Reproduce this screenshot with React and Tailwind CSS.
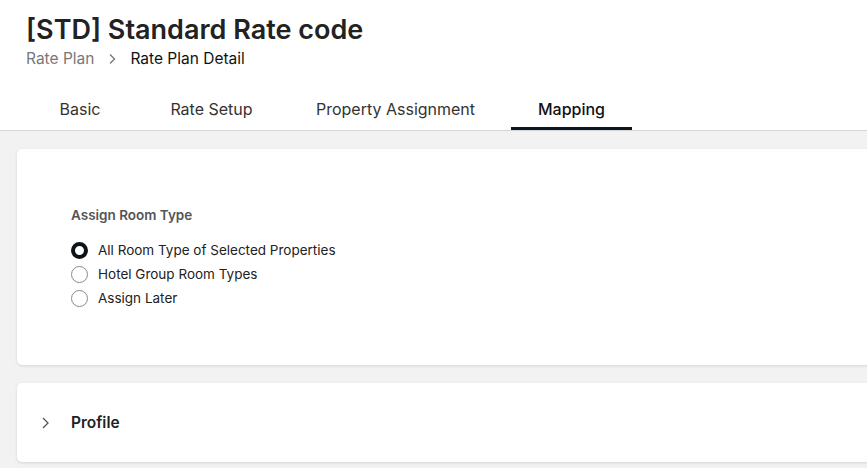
import React from 'react';

const tabs = [
  { label: 'Basic', w: 'w-[120px]', ml: 'ml-[20px]' },
  { label: 'Rate Setup', w: 'w-[121px]', ml: 'ml-[11px]' },
  { label: 'Property Assignment', w: 'w-[227px]', ml: 'ml-[10px]' },
  { label: 'Mapping', w: 'w-[121px]', ml: 'ml-[2px]', active: true },
];

const options = [
  { label: 'All Room Type of Selected Properties', checked: true },
  { label: 'Hotel Group Room Types' },
  { label: 'Assign Later' },
];

const Radio = ({ checked }) =>
  checked ? (
    <span className="w-[17px] h-[17px] rounded-full border-[4px] border-[#0d1418] bg-white shrink-0" />
  ) : (
    <span className="w-[17px] h-[17px] rounded-full border border-[#8a8a8a] bg-white shrink-0" />
  );

export default function App() {
  return (
    <div className="w-[867px] h-[468px] overflow-hidden bg-[#f2f2f2]" style={{ fontFamily: 'Inter, "Noto Sans", sans-serif' }}>
      <div className="bg-white border-b border-[#d6d6d6]">
        <div className="pl-[26px] pt-[12px]">
          <h1 className="text-[27px] leading-[36px] font-semibold text-[#222]">[STD] Standard Rate code</h1>
          <div className="flex items-center text-[15.5px] leading-[22px]">
            <span className="text-[#777]">Rate Plan</span>
            <svg className="mx-[13px]" width="10" height="12" viewBox="0 0 10 12" fill="none">
              <path d="M3 1.5 L7.5 6 L3 10.5" stroke="#777" strokeWidth="1.3" />
            </svg>
            <span className="text-[#111]">Rate Plan Detail</span>
          </div>
        </div>
        <div className="flex mt-[20px] h-[40px]">
          {tabs.map((t) => (
            <div
              key={t.label}
              className={`${t.w} ${t.ml} flex items-center justify-center text-[16px] pb-[2px] ${
                t.active ? 'text-[#111] font-medium border-b-[3px] border-[#0b161d] pt-[3px]' : 'text-[#333] pt-0'
              }`}
            >
              {t.label}
            </div>
          ))}
        </div>
      </div>

      <div className="pl-[17px] pt-[18px] flex flex-col gap-[18px]">
        <div className="w-[900px] h-[216px] bg-white rounded-[5px] shadow-[0_1px_3px_rgba(0,0,0,0.12)] pl-[54px] pt-[57px]">
          <div className="text-[13.5px] font-semibold text-[#555] leading-[18px]">Assign Room Type</div>
          <div className="mt-[14px] flex flex-col">
            {options.map((o) => (
              <label key={o.label} className="flex items-center gap-[10px] h-[24px]">
                <Radio checked={o.checked} />
                <span className="text-[13.5px] text-[#222]">{o.label}</span>
              </label>
            ))}
          </div>
        </div>

        <div className="w-[900px] h-[79px] bg-white rounded-[5px] shadow-[0_1px_3px_rgba(0,0,0,0.12)] flex items-center pl-[22px]">
          <svg width="12" height="16" viewBox="0 0 12 16" fill="none">
            <path d="M4 3 L9 8 L4 13" stroke="#555" strokeWidth="1.3" />
          </svg>
          <span className="ml-[20px] text-[15.5px] font-semibold text-[#222]">Profile</span>
        </div>
      </div>
    </div>
  );
}
